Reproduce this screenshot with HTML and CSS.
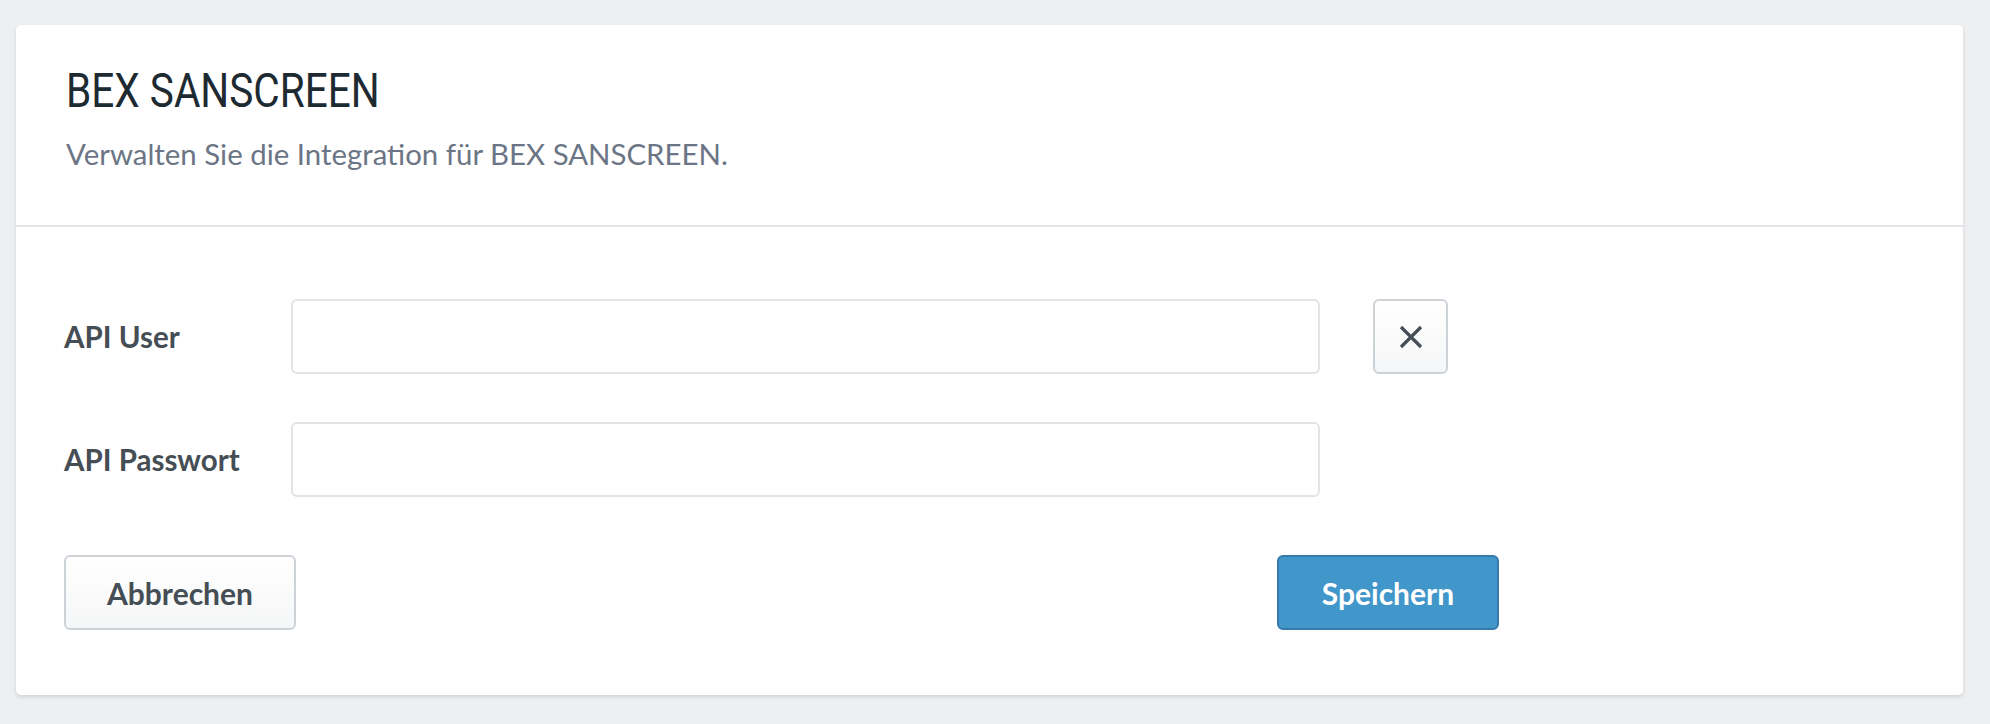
FILE: index.html
```html
<!DOCTYPE html>
<html lang="de">
<head>
<meta charset="utf-8">
<title>BEX SANSCREEN</title>
<link rel="stylesheet" href="styles.css">
</head>
<body>
<div class="card">
  <div class="card-header">
    <h1 class="title"><span class="title-text">BEX SANSCREEN</span></h1>
    <p class="subtitle">Verwalten Sie die Integration für BEX SANSCREEN.</p>
  </div>
  <div class="card-body">
    <div class="form-grid">
      <label class="label" for="apiuser">API User</label>
      <input class="input" id="apiuser" type="text">
      <button class="clear-btn" type="button" aria-label="Leeren">
        <svg width="24" height="24" viewBox="0 0 24 24"><path d="M2 2 L22 22 M22 2 L2 22" stroke="#454d55" stroke-width="3.2" fill="none"/></svg>
      </button>
      <label class="label" for="apipass">API Passwort</label>
      <input class="input" id="apipass" type="password">
      <span></span>
    </div>
    <div class="footer">
      <button class="btn btn-default" type="button">Abbrechen</button>
      <button class="btn btn-primary" type="button">Speichern</button>
    </div>
  </div>
</div>
</body>
</html>
```
FILE: styles.css
```css
html, body {
  margin: 0;
  padding: 0;
}
body {
  background: #eeeff1;
  padding: 25px 27px 30px 16px;
  font-family: Lato, "Open Sans", sans-serif;
}
.card {
  background: #ffffff;
  border-radius: 5px;
  box-shadow: 0 2px 4px rgba(0, 0, 0, 0.12);
}
.card-header {
  height: 202px;
  box-sizing: border-box;
  padding: 37px 50px 0 50px;
  border-bottom: 2px solid #e3e3e8;
}
.title {
  margin: 0;
  font-family: Roboto, "Liberation Sans", sans-serif;
  font-weight: 400;
  font-size: 48px;
  line-height: 58px;
  color: #1e2a31;
}
.title-text {
  display: inline-block;
  transform: scaleX(0.845);
  transform-origin: left center;
}
.subtitle {
  margin: 14px 0 0 0;
  font-family: Lato, "Open Sans", sans-serif;
  font-size: 29.4px;
  line-height: 40px;
  color: #6b7585;
}
.card-body {
  padding: 72px 0 65px 48px;
}
.form-grid {
  display: grid;
  grid-template-columns: 227px 1029px auto;
  row-gap: 48px;
  align-items: center;
  justify-items: start;
}
.label {
  font-family: Lato, "Open Sans", sans-serif;
  font-weight: 700;
  font-size: 29.5px;
  color: #454d55;
}
.input {
  box-sizing: border-box;
  height: 75px;
  width: 1029px;
  margin: 0;
  border: 2px solid #e2e2e7;
  border-radius: 6px;
  background: #fff;
  outline: none;
}
.clear-btn {
  box-sizing: border-box;
  width: 75px;
  height: 75px;
  padding: 0;
  margin: 0 0 0 53px;
  border: 2px solid #cdd2d7;
  border-radius: 6px;
  background: linear-gradient(#ffffff, #f5f6f7);
  display: flex;
  align-items: center;
  justify-content: center;
}
.footer {
  margin-top: 58px;
  width: 1435px;
  display: flex;
  justify-content: space-between;
}
.btn {
  box-sizing: border-box;
  height: 75px;
  border-radius: 6px;
  font-family: Lato, "Open Sans", sans-serif;
  font-weight: 700;
  font-size: 30px;
  padding: 0;
  margin: 0;
}
.btn-default {
  width: 232px;
  border: 2px solid #cdd2d7;
  background: linear-gradient(#ffffff, #f5f6f7);
  color: #454d55;
}
.btn-primary {
  width: 222px;
  border: 2px solid #3779ab;
  background: #4196ca;
  color: #ffffff;
}
```
